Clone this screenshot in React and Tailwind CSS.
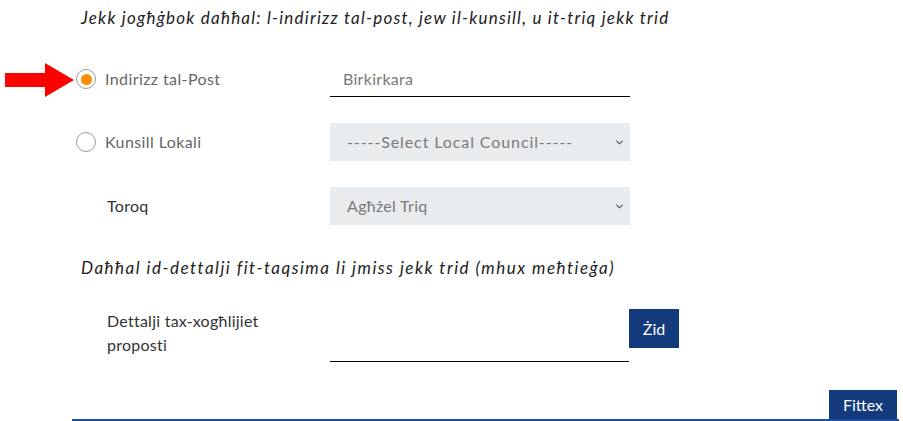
import React from 'react';
import { ChevronDown } from 'lucide-react';

function Radio({ checked }) {
  return (
    <span className="flex h-[20px] w-[20px] shrink-0 items-center justify-center rounded-full border border-[#9a9a9a] bg-white">
      {checked && <span className="h-[11px] w-[11px] rounded-full bg-[#ff8c00]" />}
    </span>
  );
}

function SelectBox({ label, wide }) {
  return (
    <div className="flex h-[38px] w-[300px] items-center justify-between bg-[#e9ecef] pl-[17px] pr-[5px] text-[16px] text-[#7a7a7a]">
      <span className={wide ? 'tracking-[0.9px]' : 'tracking-[0.3px]'}>{label}</span>
      <ChevronDown size={11} strokeWidth={3} className="text-[#666]" />
    </div>
  );
}

export default function App() {
  return (
    <div className="relative h-[421px] w-[903px] overflow-hidden bg-white font-['Lato',sans-serif]">
      <p className="pl-[81px] pt-[8px] text-[17px] leading-[20px] tracking-[1.22px] italic text-[#222]">
        Jekk jogħġbok daħħal: l-indirizz tal-post, jew il-kunsill, u it-triq jekk trid
      </p>

      <div className="relative mt-[33px] flex items-center">
        <svg className="absolute left-[5px] top-[2px]" width="70" height="34" viewBox="0 0 70 34">
          <polygon points="0,10 40,10 40,0 69,17 40,34 40,24 0,24" fill="#f00" />
        </svg>
        <div className="flex w-[330px] items-center gap-[9px] pl-[76px] text-[16px] tracking-[0.4px] text-[#666]">
          <Radio checked />
          <span>Indirizz tal-Post</span>
        </div>
        <div className="flex h-[36px] w-[300px] items-center border-b-[1.5px] border-black pl-[13px] text-[16px] tracking-[0.3px] text-[#777]">
          Birkirkara
        </div>
      </div>

      <div className="mt-[26px] flex items-center">
        <div className="flex w-[330px] items-center gap-[9px] pl-[76px] text-[16px] tracking-[0.4px] text-[#666]">
          <Radio />
          <span>Kunsill Lokali</span>
        </div>
        <SelectBox label="-----Select Local Council-----" wide />
      </div>

      <div className="mt-[26px] flex items-center">
        <div className="w-[330px] pl-[107px] text-[16px] tracking-[0.3px] text-[#333]">Toroq</div>
        <SelectBox label="Agħżel Triq" />
      </div>

      <p className="mt-[33px] pl-[81px] text-[17px] leading-[20px] tracking-[1.5px] italic text-[#222]">
        Daħħal id-dettalji fit-taqsima li jmiss jekk trid (mhux meħtieġa)
      </p>

      <div className="mt-[31px] flex items-start">
        <div className="w-[330px] pl-[107px] text-[16px] leading-[24px] tracking-[0.25px] text-[#333]">
          Dettalji tax-xogħlijiet
          <br />
          proposti
        </div>
        <div className="h-[53px] w-[299px] border-b-[1.5px] border-black" />
        <button type="button" className="h-[39px] w-[50px] bg-[#123a7d] text-[16px] text-white">
          Żid
        </button>
      </div>

      <div className="ml-[72px] mt-[28px] flex w-[827px] justify-end border-b-2 border-[#1d4f9c] pr-[2px]">
        <button type="button" className="h-[29px] w-[68px] bg-[#123a7d] text-[16px] text-white">
          Fittex
        </button>
      </div>
    </div>
  );
}
